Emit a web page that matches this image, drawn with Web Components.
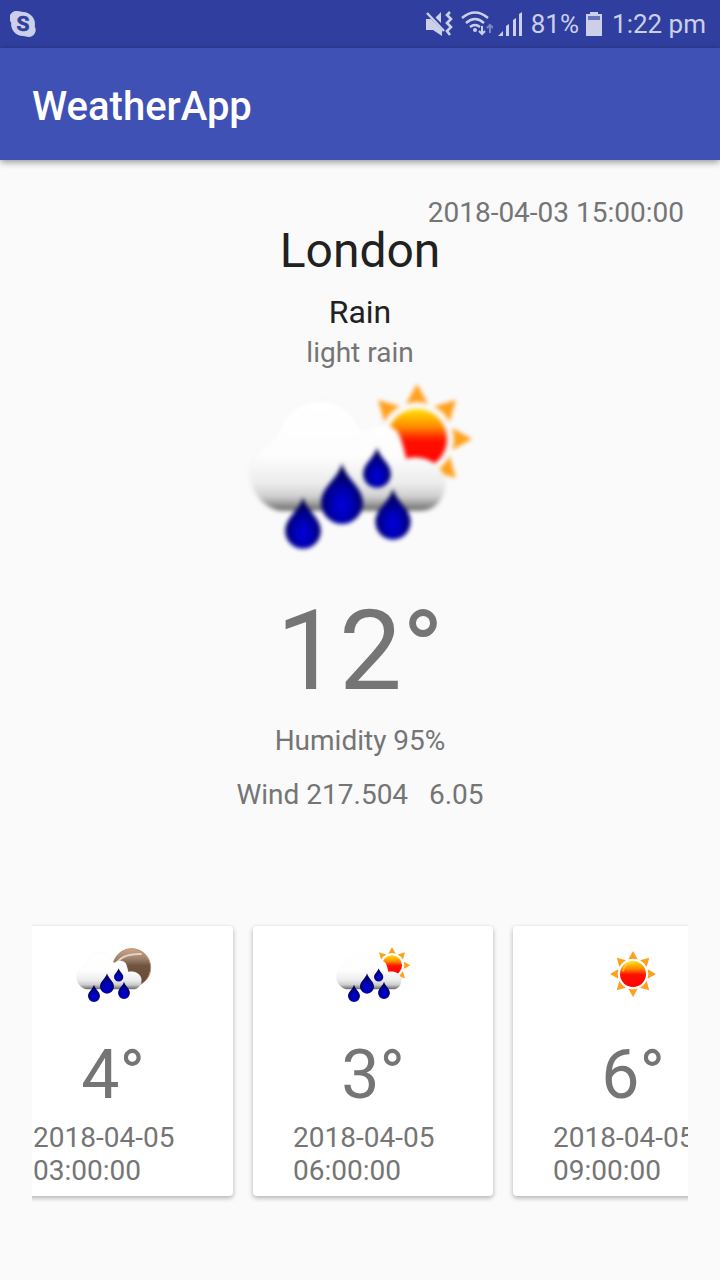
<!DOCTYPE html>
<html lang="en">
<head>
<meta charset="utf-8">
<meta name="viewport" content="width=device-width, initial-scale=1">
<title>WeatherApp</title>
<style>
  html, body { margin: 0; min-height: 100%; }
  body { background: #fafafa; color: #757575; font-family: Roboto, "Liberation Sans", sans-serif; }
</style>
</head>
<body>
<weather-app></weather-app>
<script>
const define = (name, html, ready) => {
  const template = document.createElement('template');
  template.innerHTML = html;
  customElements.define(name, class extends HTMLElement {
    constructor() {
      super();
      this.attachShadow({ mode: 'open' }).append(template.content.cloneNode(true));
    }
    connectedCallback() { if (ready) ready(this, this.shadowRoot); }
  });
};

define('status-bar', `
  <style>
    :host { display: flex; align-items: center; height: 48px; padding: 0 14px 0 10px; background: #303f9f; color: #cbcfe8; font-size: 26px; line-height: 48px; }
    svg { display: block; flex: none; }
    .spacer { flex: 1; }
    .mute { margin-right: 8px; }
    .wifi { margin-right: 5px; }
    .signal { margin-right: 9px; }
    .battery { margin: 0 10px 0 7px; }
  </style>
  <svg width="26" height="26" viewBox="0 0 26 26" role="img" aria-label="Skype">
    <path fill="#cbcfe8" d="M7.500 0C10 0 11 1 13 1A12 12 0 0 1 24.700 15.500A7 7 0 0 1 18.500 26C16.500 26 15.500 25 13 25A12 12 0 0 1 1.200 11.500A7 7 0 0 1 7.500 0Z"/>
    <text x="13" y="20" text-anchor="middle" font-family="Roboto, sans-serif" font-size="21" font-weight="700" fill="#303f9f" stroke="#303f9f" stroke-width=".6">S</text>
  </svg>
  <span class="spacer"></span>
  <svg class="mute" width="28" height="26" viewBox="0 0 28 26" fill="#cbcfe8" role="img" aria-label="Vibrate">
    <path d="M1 8H6L17 19V25L8 19H1ZM16 1V12L10.500 6.500Z"/>
    <path d="M2 2L19 20" stroke="#cbcfe8" stroke-width="2.500"/>
    <path d="M25 1L22 4L26 8L22 12L26 16L22 20L25 24" fill="none" stroke="#cbcfe8" stroke-width="2.600"/>
  </svg>
  <svg class="wifi" width="32" height="26" viewBox="0 0 32 26" fill="none" stroke="#cbcfe8" stroke-width="2.500" role="img" aria-label="Wi-Fi">
    <path d="M1 7Q14 -4 27 7M5 12Q14 4 23 12M9 16Q14 12 19 16"/>
    <circle cx="14" cy="19" r="2" fill="#cbcfe8" stroke="none"/>
    <path d="M21 15V23M18 20L21 23L24 20" stroke-width="2"/>
    <path d="M29 22V14M26 17L29 14L32 17" stroke="#7c86c5" stroke-width="2"/>
  </svg>
  <svg class="signal" width="24" height="24" viewBox="0 0 24 24" fill="#cbcfe8" role="img" aria-label="Signal">
    <path d="M0 24L5 19V24ZM8 24V14L11 12V24ZM15 24V8L18 6V24ZM21 24V2L24 0V24Z"/>
  </svg>
  <span>81%</span>
  <svg class="battery" width="16" height="24" viewBox="0 0 16 24" role="img" aria-label="Battery">
    <path fill="#cbcfe8" d="M4 0H12V2H16V24H0V2H4Z"/><path fill="#6974bb" d="M2 4H14V8H2Z"/>
  </svg>
  <span>1:22 pm</span>
`);

define('app-bar', `
  <style>
    :host { display: flex; align-items: center; height: 112px; padding: 6px 32px 0; box-sizing: border-box; background: #3f51b5; color: #fff; box-shadow: 0 2px 7px rgba(0,0,0,.42); }
    h1 { margin: 0; font-size: 40px; line-height: 48px; font-weight: 500; }
  </style>
  <h1><slot></slot></h1>
`);

const drop = (x, y, s) => `<path transform="translate(${x} ${y}) scale(${s})" fill="url(#drop)" d="M0 -40C4 -24 21 -16 21 0A21 21 0 0 1 -21 0C-21 -16 -4 -24 0 -40Z"/>`;
const ray = (x, y, tip, base, half, a) => `<path transform="translate(${x} ${y}) rotate(${a})" fill="#ff9f1c" d="M0 ${-tip}L${half} ${-base}Q0 ${-base - 4} ${-half} ${-base}Z"/>`;
const cloud = `
  <path fill="url(#cloud)" stroke="#ebebeb" stroke-opacity=".6" d="M40 136C24 134 10 116 10 100C11 87 17 78 26 71C34 65 38 58 42 48C50 34 62 27 80 26C102 26 113 40 123 57C137 47 152 49 158 58C162 66 164 76 166 84C184 79 202 89 205 104C207 121 197 136 181 136Z"/>
  ${drop(63, 156, .85)}${drop(102, 128, 1)}${drop(137, 99, .66)}${drop(153, 147, .84)}`;
const scenes = {
  'rain-day': [0, 45, 90, 135, 315].map(a => ray(177, 64, 55, 35, 11, a)).join('')
    + '<circle cx="177" cy="64" r="30" fill="url(#sun)"/>' + cloud,
  'rain-night': '<circle cx="176" cy="71" r="57" fill="url(#moon)" stroke="#b98f70" stroke-width="3"/><path d="M128 64Q142 28 206 30" fill="none" stroke="#e4d3c5" stroke-width="6"/>' + cloud,
  'clear-day': [0, 45, 90, 135, 180, 225, 270, 315].map(a => ray(120, 90, 69, 44, 14, a)).join('')
    + '<circle cx="120" cy="90" r="39" fill="url(#sun)"/><path d="M90 82Q93 56 124 56" fill="none" stroke="#ffd34a" stroke-width="5" opacity=".7"/>'
};

define('weather-icon', `
  <style>
    :host { display: block; width: 240px; }
    svg { display: block; width: 100%; filter: blur(var(--softness, 0)); }
  </style>
  <svg viewBox="0 0 240 180" role="img">
    <defs>
      <linearGradient id="cloud" x1="0" y1="0" x2="0" y2="1"><stop offset="0" stop-color="#fff"/><stop offset=".5" stop-color="#fdfdfd"/><stop offset=".75" stop-color="#ececec"/><stop offset=".87" stop-color="#cfcfcf"/><stop offset=".94" stop-color="#999"/><stop offset="1" stop-color="#606060"/></linearGradient>
      <linearGradient id="sun" x1="0" y1="0" x2="0" y2="1"><stop offset="0" stop-color="#ffe000"/><stop offset=".3" stop-color="#ff8a00"/><stop offset=".52" stop-color="#f10"/><stop offset="1" stop-color="#f00"/></linearGradient>
      <linearGradient id="moon" x1="0" y1="0" x2="0" y2="1"><stop offset="0" stop-color="#d0a582"/><stop offset=".25" stop-color="#a08470"/><stop offset=".45" stop-color="#705440"/><stop offset="1" stop-color="#654936"/></linearGradient>
      <radialGradient id="drop" cx=".5" cy=".7" r=".6"><stop offset="0" stop-color="#0000dc"/><stop offset=".4" stop-color="#0000b4"/><stop offset="1" stop-color="#000048"/></radialGradient>
    </defs>
    <g></g>
  </svg>
`, (host, root) => {
  root.querySelector('g').innerHTML = scenes[host.getAttribute('name')];
  root.querySelector('svg').setAttribute('aria-label', host.getAttribute('label'));
});

define('current-weather', `
  <style>
    :host { display: flex; flex-direction: column; align-items: center; padding: 39px 36px 0; font-size: 28px; line-height: 32px; text-align: center; }
    p, h2, h3 { margin: 0; font-weight: 400; }
    .date { align-self: flex-end; line-height: 28px; }
    h2 { color: #212121; font-size: 48px; line-height: 48px; }
    h3 { color: #212121; font-size: 32px; line-height: 32px; margin: 21px 0 9px; }
    weather-icon { margin: 6px 0 40px; --softness: 2px; }
    .temp { font-size: 112px; line-height: 112px; }
    .humidity { margin: 18px 0 22px; }
    .wind { white-space: pre; }
  </style>
  <p class="date"><slot name="date"></slot></p>
  <h2><slot name="city"></slot></h2>
  <h3><slot name="summary"></slot></h3>
  <p><slot name="detail"></slot></p>
  <weather-icon name="rain-day" label="Rain"></weather-icon>
  <p class="temp"><slot name="temp"></slot></p>
  <p class="humidity"><slot name="humidity"></slot></p>
  <p class="wind"><slot name="wind"></slot></p>
`);

define('forecast-card', `
  <style>
    :host { display: flex; flex-direction: column; flex: none; width: 240px; box-sizing: border-box; padding: 18px 40px 9px; background: #fff; border-radius: 4px; box-shadow: 0 2px 5px rgba(0,0,0,.3); }
    weather-icon { width: 80px; align-self: center; }
    p { margin: 0; }
    .temp { margin: 37px 0 12px; font-size: 68px; line-height: 68px; text-align: center; }
    .date { font-size: 28px; line-height: 33px; }
  </style>
  <weather-icon></weather-icon>
  <p class="temp"><slot name="temp"></slot></p>
  <p class="date"><slot></slot></p>
`, (host, root) => {
  const icon = root.querySelector('weather-icon');
  const next = document.createElement('weather-icon');
  next.setAttribute('name', host.getAttribute('icon'));
  next.setAttribute('label', host.getAttribute('label'));
  icon.replaceWith(next);
});

define('forecast-strip', `
  <style>
    :host { display: flex; gap: 20px; margin: 113px 32px 0; padding: 2px 0 10px; overflow-x: auto; scrollbar-width: none; }
  </style>
  <slot></slot>
`, host => {
  // The cards connect after the strip, so scroll once they have a width.
  queueMicrotask(() => { host.scrollLeft = Number(host.getAttribute('start')); });
});

define('weather-app', `
  <style>
    :host { display: block; padding-bottom: 32px; }
  </style>
  <status-bar></status-bar>
  <app-bar>WeatherApp</app-bar>
  <main>
    <current-weather>
      <span slot="date">2018-04-03 15:00:00</span>
      <span slot="city">London</span>
      <span slot="summary">Rain</span>
      <span slot="detail">light rain</span>
      <span slot="temp">12°</span>
      <span slot="humidity">Humidity 95%</span>
      <span slot="wind">Wind 217.504   6.05</span>
    </current-weather>
    <forecast-strip start="39">
      <forecast-card icon="rain-night" label="Rain, night"><span slot="temp">4°</span>2018-04-05 03:00:00</forecast-card>
      <forecast-card icon="rain-day" label="Rain"><span slot="temp">3°</span>2018-04-05 06:00:00</forecast-card>
      <forecast-card icon="clear-day" label="Clear sky"><span slot="temp">6°</span>2018-04-05 09:00:00</forecast-card>
    </forecast-strip>
  </main>
`);
</script>
</body>
</html>
